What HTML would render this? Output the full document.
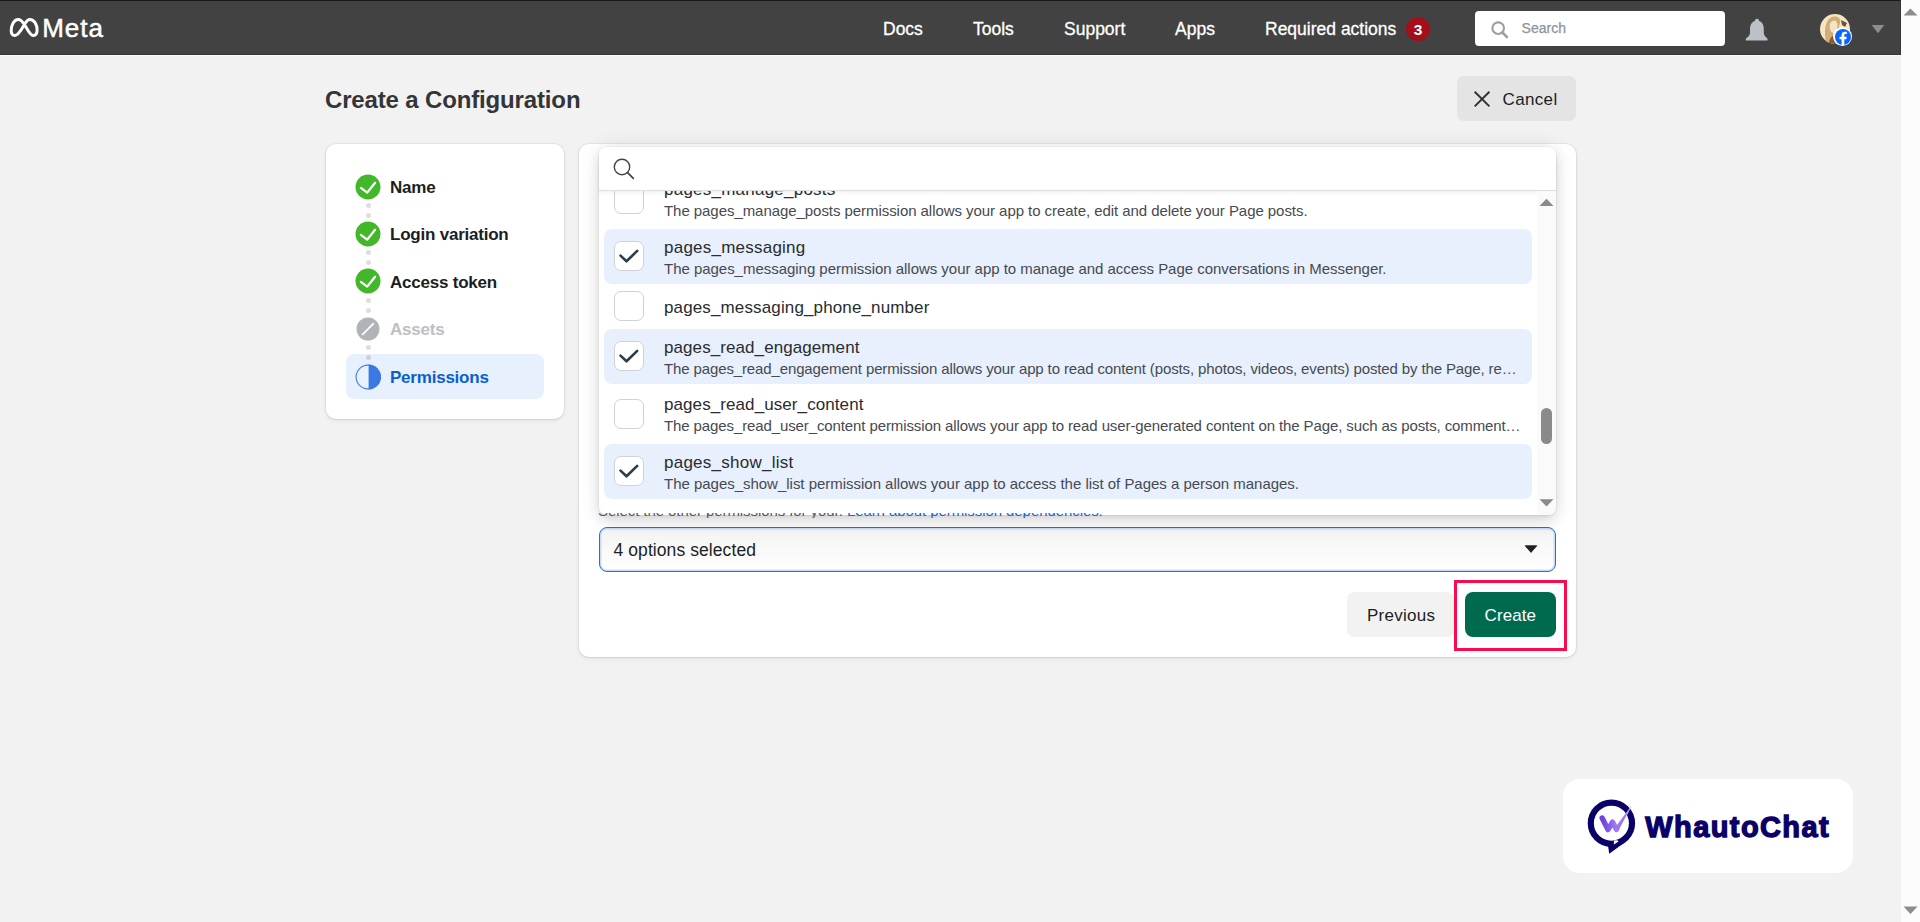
<!DOCTYPE html>
<html><head><meta charset="utf-8">
<style>
*{box-sizing:border-box;margin:0;padding:0}
html,body{width:1920px;height:922px;overflow:hidden;background:#f2f2f2;font-family:"Liberation Sans",sans-serif;color:#1c1e21;-webkit-font-smoothing:antialiased}
.a{position:absolute}
.t{position:absolute;white-space:nowrap;line-height:1}
#hdr{left:0;top:0;width:1901px;height:55px;background:#424242;border-top:1px solid #181818;border-bottom:1px solid #363636;border-right:1px solid #363636}
#hdrline{left:0;top:55px;width:1901px;height:1px;background:#fbfbfb}
.nav{color:#fff;font-size:17.5px;top:21px;-webkit-text-stroke:0.3px #fff}
#sb{left:1901px;top:0;width:19px;height:922px;background:#fcfcfc}
.card{background:#fff;border-radius:10px;box-shadow:0 0 0 1px rgba(0,0,0,.04),0 1px 3px rgba(0,0,0,.08),0 2px 6px rgba(0,0,0,.04)}
.step{font-size:17px;font-weight:700;letter-spacing:-0.22px;color:#1c1e21}
.dot{position:absolute;width:5px;height:5px;border-radius:50%;background:rgba(0,0,0,.13);left:366px}
.sel{position:absolute;left:604px;width:928px;height:55px;background:#e7f0fc;border-radius:8px}
.cb{position:absolute;left:614px;width:30px;height:30px;border:1px solid #cfd2d6;border-radius:7px;background:#fff}
.ti{font-size:17px;color:#2a2c2f;left:664px}
.de{font-size:15px;color:#464a50;left:664px;letter-spacing:-0.05px}
</style></head><body>

<!-- header -->
<div id="hdr" class="a"></div>
<div id="hdrline" class="a"></div>
<svg class="a" style="left:8px;top:15px" width="34" height="26" viewBox="0 0 34 26">
<path d="M3.2,15.5 C3.2,10 6,4.4 10.2,4.4 C12.5,4.4 14.5,6.5 16.4,9.5 C19,13.5 21.8,20.5 25.2,20.5 C27.6,20.5 29.1,18.3 29.1,15 C29.1,9.5 26,4.4 22.1,4.4 C19.8,4.4 18,6.5 16.4,9.5 C14,13.5 10.8,20.5 6.8,20.5 C4.5,20.5 3.2,18.5 3.2,15.5 Z" fill="none" stroke="#fff" stroke-width="3" stroke-linejoin="round"/>
</svg>
<div class="t" style="left:42.2px;top:14.8px;font-size:26px;color:#fff;letter-spacing:0.95px;-webkit-text-stroke:0.5px #fff">Meta</div>

<div class="t nav" style="left:883px">Docs</div>
<div class="t nav" style="left:973px">Tools</div>
<div class="t nav" style="left:1064px">Support</div>
<div class="t nav" style="left:1175px">Apps</div>
<div class="t nav" style="left:1265px">Required actions</div>
<div class="a" style="left:1406px;top:17px;width:24px;height:24px;border-radius:50%;background:#a50e1b"></div>
<div class="t" style="left:1406px;top:21.5px;width:24px;text-align:center;font-size:15.5px;font-weight:700;color:#fff">3</div>

<div class="a" style="left:1475px;top:11px;width:250px;height:35px;background:#fff;border-radius:4px"></div>
<svg class="a" style="left:1489px;top:20px" width="22" height="22" viewBox="0 0 22 22">
<circle cx="9.2" cy="8.2" r="5.8" fill="none" stroke="#9a9fa6" stroke-width="2.1"/>
<line x1="13.4" y1="12.5" x2="17.9" y2="17" stroke="#9a9fa6" stroke-width="2.5" stroke-linecap="round"/>
</svg>
<div class="t" style="left:1521.6px;top:21px;font-size:14px;color:#8d949e;-webkit-text-stroke:0.25px #8d949e">Search</div>

<svg class="a" style="left:1744px;top:17px" width="26" height="25" viewBox="0 0 26 25"><path d="M13,1.8 C14.5,1.8 15,3 15.2,4 C18.5,5 19.8,8.5 19.8,12 L19.8,16 C19.8,18.5 22,20.5 23.5,21.5 L23.5,23.6 L1.8,23.6 L1.8,21.5 C3.5,20.5 6,18.5 6,16 L6,12 C6,8.5 7.5,5 10.8,4 C11,3 11.5,1.8 13,1.8 Z" fill="#bcc0c7"/></svg>

<svg class="a" style="left:1820px;top:13.5px" width="30" height="30" viewBox="0 0 30 30"><defs><clipPath id="av"><circle cx="15" cy="15" r="15"/></clipPath></defs><g clip-path="url(#av)"><rect width="30" height="30" fill="#f3e6c0"/><path d="M6,30 C5,22 4,14 7,8 C9,3 15,1 19,4 C21,6 20,10 19,13 C18,17 17,22 18,30 Z" fill="#d2ad78"/><path d="M10,10 C11,6 16,5 17,9 C18,13 17,17 14,19 C11,19 9,15 10,10 Z" fill="#f2e4c4"/><path d="M9,30 C9,25 12,21 15,21 C18,22 19,26 19,30 Z" fill="#8a5a30"/><path d="M21,6 L27,9 L25,13 L22,11 Z" fill="#6b5040"/></g></svg>
<div class="a" style="left:1833px;top:27px;width:19px;height:19px;border-radius:50%;background:#fff"></div>
<svg class="a" style="left:1834.5px;top:28.5px" width="16" height="16" viewBox="0 0 16 16">
<circle cx="8" cy="8" r="8" fill="#0866ff"/>
<path d="M9.3,16 L9.3,10.2 L11.4,10.2 L11.8,7.7 L9.3,7.7 L9.3,6.3 C9.3,5.6 9.6,5.1 10.6,5.1 L11.9,5.1 L11.9,2.9 C11.4,2.8 10.7,2.7 9.9,2.7 C7.9,2.7 6.6,3.9 6.6,6 L6.6,7.7 L4.5,7.7 L4.5,10.2 L6.6,10.2 L6.6,16 Z" fill="#fff"/>
</svg>
<svg class="a" style="left:1871px;top:25px" width="14" height="10" viewBox="0 0 14 10">
<path d="M0.7,0 L13.3,0 L7.6,7.4 Q7,8.1 6.4,7.4 Z" fill="#8d8d8d"/>
</svg>

<!-- page scrollbar -->
<div id="sb" class="a"></div>
<svg class="a" style="left:1903px;top:8px" width="15" height="8" viewBox="0 0 15 8"><path d="M0.5,7.5 L14.5,7.5 L7.5,0.5 Z" fill="#8c8c8c"/></svg>
<svg class="a" style="left:1903px;top:906px" width="15" height="9" viewBox="0 0 15 9"><path d="M0.5,0.5 L14.5,0.5 L7.5,8 Z" fill="#8c8c8c"/></svg>

<!-- title -->
<div class="t" style="left:325px;top:88px;font-size:24px;font-weight:700;color:#333537;letter-spacing:-0.15px">Create a Configuration</div>
<div class="a" style="left:1457px;top:76px;width:119px;height:45px;background:#e4e4e4;border-radius:7px"></div>
<svg class="a" style="left:1472px;top:89px" width="20" height="20" viewBox="0 0 20 20">
<path d="M2.7,2.7 L17.4,17.4 M17.4,2.7 L2.7,17.4" stroke="#333" stroke-width="2" stroke-linecap="butt"/>
</svg>
<div class="t" style="left:1502.5px;top:90.6px;font-size:17px;color:#1c1e21;letter-spacing:0.35px">Cancel</div>

<!-- left card -->
<div class="a card" style="left:326px;top:144px;width:238px;height:275px"></div>
<div class="a" style="left:346px;top:354px;width:198px;height:45px;background:#e7f0fd;border-radius:8px"></div>
<svg class="a" style="left:355px;top:173.5px" width="26" height="26" viewBox="0 0 26 26"><circle cx="13" cy="13" r="12.5" fill="#42b72a"/><path d="M5.9,13.9 L12.2,18.6 L20.1,8.8" fill="none" stroke="#fff" stroke-width="2.3" stroke-linecap="round" stroke-linejoin="round"/></svg>
<div class="t step" style="left:390px;top:179.0px;color:#1c1e21">Name</div>
<div class="dot" style="top:203.0px"></div><div class="dot" style="top:213.0px"></div>
<svg class="a" style="left:355px;top:220.5px" width="26" height="26" viewBox="0 0 26 26"><circle cx="13" cy="13" r="12.5" fill="#42b72a"/><path d="M5.9,13.9 L12.2,18.6 L20.1,8.8" fill="none" stroke="#fff" stroke-width="2.3" stroke-linecap="round" stroke-linejoin="round"/></svg>
<div class="t step" style="left:390px;top:226.0px;color:#1c1e21">Login variation</div>
<div class="dot" style="top:250.0px"></div><div class="dot" style="top:260.0px"></div>
<svg class="a" style="left:355px;top:268px" width="26" height="26" viewBox="0 0 26 26"><circle cx="13" cy="13" r="12.5" fill="#42b72a"/><path d="M5.9,13.9 L12.2,18.6 L20.1,8.8" fill="none" stroke="#fff" stroke-width="2.3" stroke-linecap="round" stroke-linejoin="round"/></svg>
<div class="t step" style="left:390px;top:273.5px;color:#1c1e21">Access token</div>
<div class="dot" style="top:297.5px"></div><div class="dot" style="top:307.5px"></div>
<svg class="a" style="left:356px;top:316.6px" width="24" height="24" viewBox="0 0 24 24"><circle cx="12" cy="12" r="11.5" fill="#b0b3b8"/><path d="M6.7,17.4 L17.4,6.7" stroke="#fff" stroke-width="1.8" stroke-linecap="round"/></svg>
<div class="t step" style="left:390px;top:320.5px;color:#bcc0c4">Assets</div>
<div class="dot" style="top:344.5px"></div><div class="dot" style="top:354.5px"></div>
<svg class="a" style="left:355px;top:363.5px" width="26" height="26" viewBox="0 0 26 26"><circle cx="13" cy="13" r="11.9" fill="#e9f1fd" stroke="#4a82e6" stroke-width="1.2"/><path d="M13.6,0.5 A12.5,12.5 0 0 1 13.6,25.5 Z" fill="#3a79e4"/></svg>
<div class="t step" style="left:390px;top:368.8px;color:#0b5ed0">Permissions</div>
<div class="a card" style="left:579px;top:144px;width:997px;height:513px"></div>

<div class="a" style="left:599px;top:527px;width:957px;height:45px;border:1.5px solid #1b74e4;border-radius:8px;background:linear-gradient(#f3f3f3,#fff);box-shadow:inset 0 0 0 1.5px #c9dcf6"></div>
<div class="t" style="left:613.5px;top:542.2px;font-size:17.5px;color:#1c1e21;letter-spacing:0.08px">4 options selected</div>
<svg class="a" style="left:1523px;top:543.6px" width="16" height="10" viewBox="0 0 16 10"><path d="M2.2,1.8 L13.8,1.8 L8,8.4 Z" fill="#222" stroke="#222" stroke-width="0.9" stroke-linejoin="round"/></svg>
<div class="a" style="left:1347px;top:592px;width:107px;height:45px;background:#f2f2f2;border-radius:7px"></div>
<div class="t" style="left:1367px;top:606.6px;font-size:17px;color:#1c1e21;letter-spacing:0.25px">Previous</div>
<div class="a" style="left:1454px;top:580px;width:113px;height:71px;border:3px solid #fb0a4e"></div>
<div class="a" style="left:1465px;top:592px;width:91px;height:45px;background:#006a4e;border-radius:8px"></div>
<div class="t" style="left:1484.5px;top:607px;font-size:17px;color:#fff;letter-spacing:0.1px">Create</div>

<!-- dropdown -->
<div class="a" style="left:599px;top:147px;width:957px;height:368px;background:#fff;border-radius:8px;box-shadow:0 0 0 0.5px rgba(0,0,0,.06),0 8px 14px rgba(0,0,0,.09),0 0 20px rgba(0,0,0,.10),0 2px 3px rgba(0,0,0,.05)"></div>
<div class="cb" style="top:184px"></div>
<div class="t ti" style="top:180.6px;letter-spacing:0.234px">pages_manage_posts</div>
<div class="t de" style="top:202.9px;letter-spacing:-0.056px">The pages_manage_posts permission allows your app to create, edit and delete your Page posts.</div>
<div class="sel" style="top:229px"></div>
<div class="cb" style="top:241px"><svg width="28" height="28" viewBox="0 0 28 28" style="position:absolute;left:0;top:0"><path d="M5.5,13.6 L11.5,19.3 L22.2,8.9" fill="none" stroke="#2a3d4c" stroke-width="2.6" stroke-linecap="round" stroke-linejoin="round"/></svg></div>
<div class="t ti" style="top:239.4px;letter-spacing:0.234px">pages_messaging</div>
<div class="t de" style="top:261.3px;letter-spacing:-0.029px">The pages_messaging permission allows your app to manage and access Page conversations in Messenger.</div>
<div class="cb" style="top:291.3px"></div>
<div class="t ti" style="top:298.9px;letter-spacing:0.132px">pages_messaging_phone_number</div>
<div class="sel" style="top:329px"></div>
<div class="cb" style="top:341.3px"><svg width="28" height="28" viewBox="0 0 28 28" style="position:absolute;left:0;top:0"><path d="M5.5,13.6 L11.5,19.3 L22.2,8.9" fill="none" stroke="#2a3d4c" stroke-width="2.6" stroke-linecap="round" stroke-linejoin="round"/></svg></div>
<div class="t ti" style="top:339.0px;letter-spacing:0.082px">pages_read_engagement</div>
<div class="t de" style="top:360.7px;letter-spacing:-0.125px">The pages_read_engagement permission allows your app to read content (posts, photos, videos, events) posted by the Page, re…</div>
<div class="cb" style="top:399.2px"></div>
<div class="t ti" style="top:396.2px;letter-spacing:0.085px">pages_read_user_content</div>
<div class="t de" style="top:417.9px;letter-spacing:-0.108px">The pages_read_user_content permission allows your app to read user-generated content on the Page, such as posts, comment…</div>
<div class="sel" style="top:444px"></div>
<div class="cb" style="top:456.2px"><svg width="28" height="28" viewBox="0 0 28 28" style="position:absolute;left:0;top:0"><path d="M5.5,13.6 L11.5,19.3 L22.2,8.9" fill="none" stroke="#2a3d4c" stroke-width="2.6" stroke-linecap="round" stroke-linejoin="round"/></svg></div>
<div class="t ti" style="top:454.3px;letter-spacing:0.253px">pages_show_list</div>
<div class="t de" style="top:476.0px;letter-spacing:-0.022px">The pages_show_list permission allows your app to access the list of Pages a person manages.</div>
<div class="a" style="left:599px;top:147px;width:957px;height:44px;background:#fff;border-radius:8px 8px 0 0;border-bottom:1px solid #dddfe2;box-shadow:0 2px 4px rgba(0,0,0,.06)"></div>
<svg class="a" style="left:611px;top:156px" width="26" height="26" viewBox="0 0 26 26">
<circle cx="11" cy="11" r="7.7" fill="none" stroke="#444" stroke-width="1.4"/>
<line x1="16.6" y1="16.6" x2="22.3" y2="22.3" stroke="#444" stroke-width="1.7" stroke-linecap="round"/>
</svg>
<div class="a" style="left:1537px;top:191px;width:19px;height:324px;background:#fafafa;border-radius:0 0 8px 0"></div>
<svg class="a" style="left:1539px;top:198px" width="15" height="9" viewBox="0 0 15 9"><path d="M0.5,8 L14.5,8 L7.5,0.8 Z" fill="#8a8a8a"/></svg>
<svg class="a" style="left:1539px;top:499px" width="15" height="9" viewBox="0 0 15 9"><path d="M0.5,0.3 L14.5,0.3 L7.5,7.5 Z" fill="#8a8a8a"/></svg>
<div class="a" style="left:1541px;top:408px;width:11px;height:36px;border-radius:6px;background:#8a8a8a"></div>
<div class="a" style="left:590px;top:512.5px;width:600px;height:5px;overflow:hidden"><div class="t" style="left:8px;top:-9.4px;font-size:15px;color:#55595f;letter-spacing:-0.075px">Select the other permissions for your. <span style="color:#1b63d4">Learn about permission dependencies.</span></div></div>

<!-- badge -->
<div class="a" style="left:1563px;top:779px;width:290px;height:94px;background:#fff;border-radius:17px"></div>
<svg class="a" style="left:1580px;top:792px" width="66" height="68" viewBox="0 0 66 68">
<defs><linearGradient id="pg" x1="0" y1="0" x2="1" y2="0"><stop offset="0" stop-color="#6a40e2"/><stop offset="1" stop-color="#a27ef5"/></linearGradient></defs>
<circle cx="31.4" cy="31.2" r="20.6" fill="none" stroke="#0b0068" stroke-width="6.2"/>
<path d="M28,53.5 L29.2,61.8 L44,51 L38,49 L34,51 Z" fill="#0b0068"/>
<path d="M33.9,48.6 L33.9,52.4 L38.5,49.6 L37.5,48.3 Z" fill="#fff"/>
<path d="M34.6,37.8 L52.3,12.3 L39.6,38.6 Z" fill="#fff"/>
<path d="M22.2,26 L28,37.6 L32.6,30.2 L36.6,37.4" fill="none" stroke="url(#pg)" stroke-width="5.4" stroke-linecap="round" stroke-linejoin="round"/>
<path d="M34.4,36.4 L51.8,13.3 L38.9,37.8 Z" fill="#9a78f2"/>
</svg>
<div class="t" style="left:1645.3px;top:812.8px;font-size:29px;font-weight:700;color:#0b0068;letter-spacing:1.4px;-webkit-text-stroke:1.3px #0b0068">WhautoChat</div>
</body></html>
